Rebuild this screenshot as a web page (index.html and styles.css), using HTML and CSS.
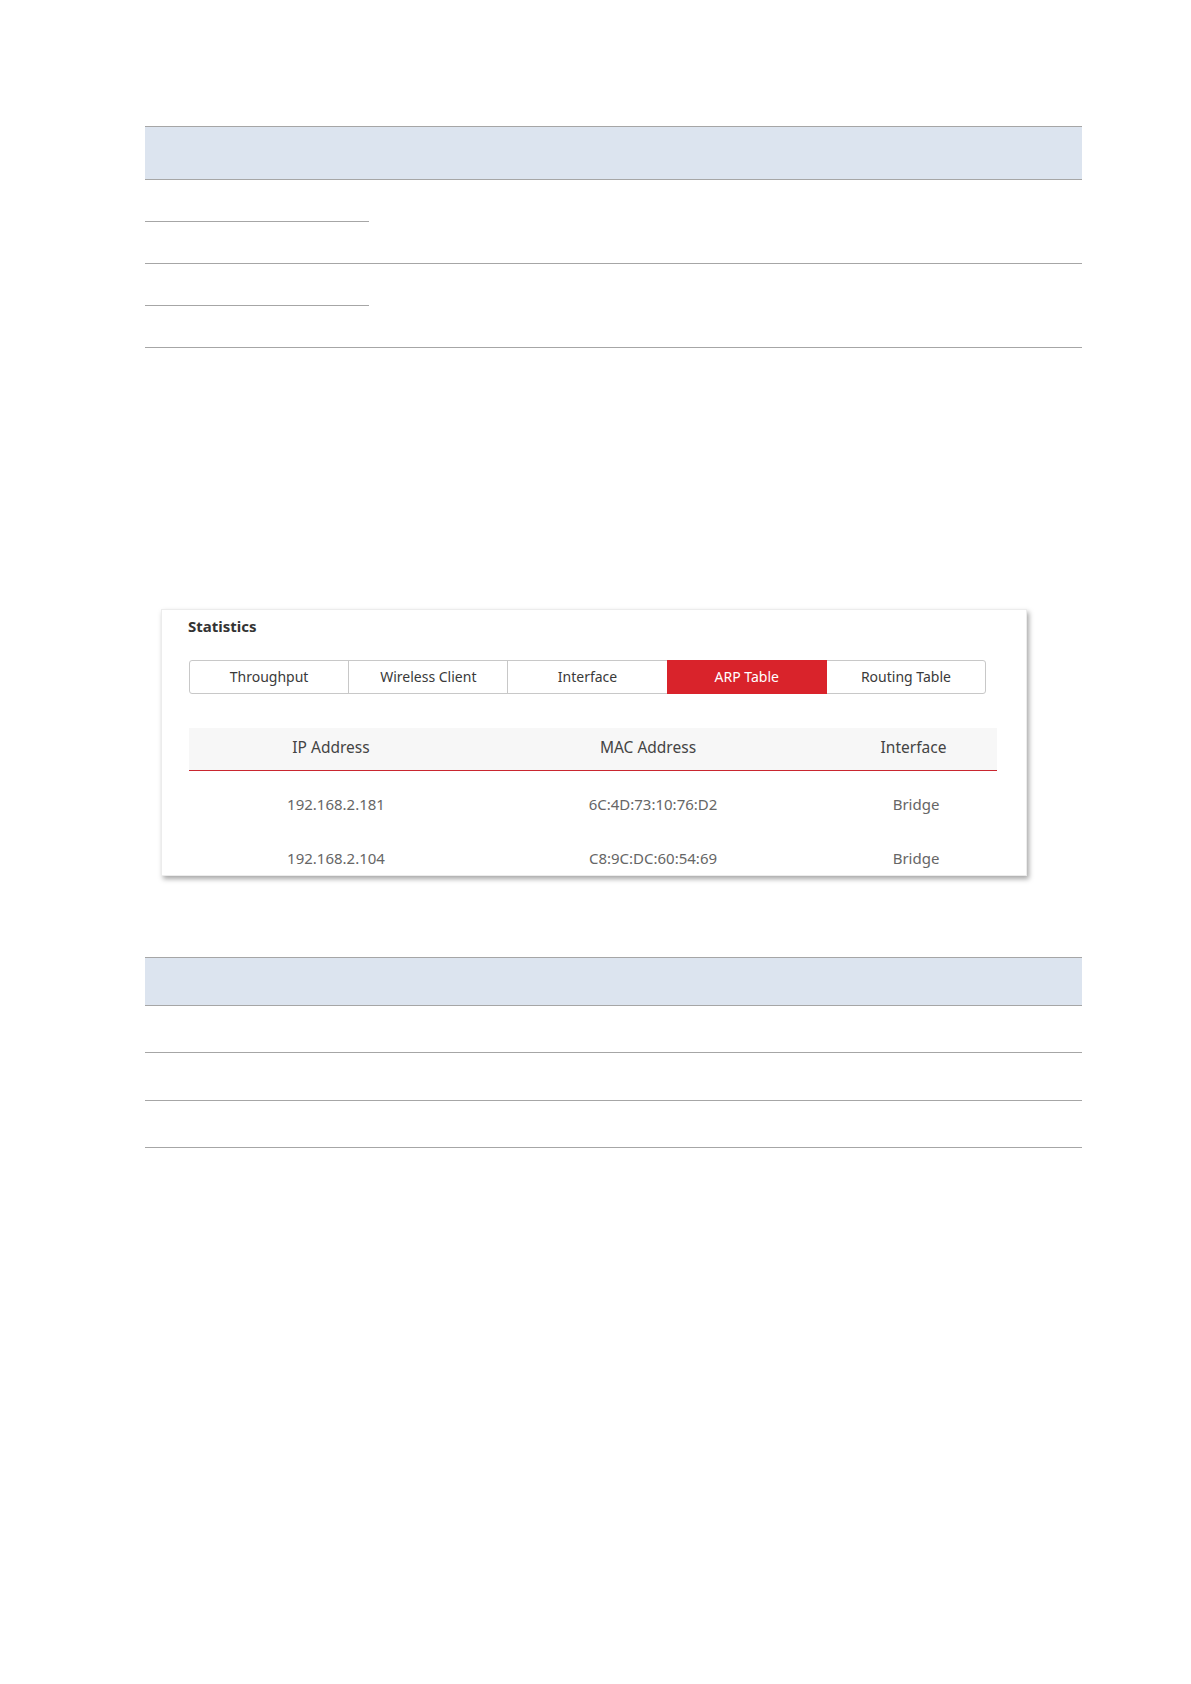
FILE: index.html
```html
<!DOCTYPE html>
<html lang="en">
<head>
  <meta charset="UTF-8">
  <title>Statistics - ARP Table</title>
  <link rel="stylesheet" href="styles.css">
</head>
<body>

  <div class="page">

    <div class="doc-table top-table">
      <div class="doc-head"></div>
      <div class="cell c1"></div>
      <div class="cell c2 span2"></div>
      <div class="cell c1"></div>
      <div class="cell c1"></div>
      <div class="cell c2 span2"></div>
      <div class="cell c1"></div>
    </div>

    <div class="card">
      <div class="card-title">Statistics</div>

      <div class="tabs">
        <div class="tab">Throughput</div>
        <div class="tab">Wireless Client</div>
        <div class="tab">Interface</div>
        <div class="tab active">ARP Table</div>
        <div class="tab">Routing Table</div>
      </div>

      <div class="arp">
        <div class="arp-head">
          <span>IP Address</span>
          <span>MAC Address</span>
          <span>Interface</span>
        </div>
        <div class="arp-body">
          <div class="arp-row">
            <span>192.168.2.181</span>
            <span>6C:4D:73:10:76:D2</span>
            <span>Bridge</span>
          </div>
          <div class="arp-row">
            <span>192.168.2.104</span>
            <span>C8:9C:DC:60:54:69</span>
            <span>Bridge</span>
          </div>
        </div>
      </div>
    </div>

    <div class="doc-table bottom-table">
      <div class="doc-head"></div>
      <div class="row"></div>
      <div class="row"></div>
      <div class="row"></div>
    </div>

  </div>

</body>
</html>
```

FILE: styles.css
```css
* { box-sizing: border-box; }
body { margin: 0; background: #fff; font-family: "Noto Sans", "Open Sans", Arial, sans-serif; }
.page { width: 937px; margin-left: 145px; padding-top: 126px; }

/* document tables (empty) */
.doc-table { border-top: 1px solid #a6a6a6; }
.doc-head { background: #dce4ef; border-bottom: 1px solid #a6a6a6; }

.top-table { display: grid; grid-template-columns: 224px 1fr; grid-template-rows: 53px repeat(4, 42px); }
.top-table .doc-head { grid-column: 1 / 3; }
.top-table .cell { border-bottom: 1px solid #a6a6a6; }
.top-table .c1 { grid-column: 1; }
.top-table .c2 { grid-column: 2; }
.top-table .span2 { grid-row: span 2; }

.bottom-table { margin-top: 81px; }
.bottom-table .doc-head { height: 48px; }
.bottom-table .row { height: 47px; border-bottom: 1px solid #a6a6a6; }
.bottom-table .row:nth-child(3) { height: 48px; }

/* statistics card */
.card { width: 866px; height: 267px; margin: 261px 0 0 16px; padding: 0 27px; background: #fff; border: 1px solid #ececec; box-shadow: 2px 3px 5px rgba(0,0,0,0.35); overflow: hidden; }
.card-title { font-size: 15px; font-weight: bold; color: #333; line-height: 20px; padding-top: 6px; margin-left: -1px; }

.tabs { display: flex; width: 797px; margin-top: 24px; }
.tab { flex: 1; height: 34px; line-height: 32px; text-align: center; font-size: 14px; color: #3a3a3a; border: 1px solid #c8c8c8; margin-left: -1px; }
.tab:first-child { margin-left: 0; border-radius: 3px 0 0 3px; }
.tab:last-child { border-radius: 0 3px 3px 0; }
.tab.active { background: #d9232b; border-color: #d9232b; color: #fff; position: relative; }

.arp { width: 808px; margin-top: 34px; }
.arp-head, .arp-row { display: grid; grid-template-columns: 284px 350px 1fr; text-align: center; }
.arp-head span:nth-child(3), .arp-row span:nth-child(3) { padding-left: 7px; }
.arp-head { height: 43px; line-height: 39px; background: #f7f7f7; border-bottom: 1px solid #c9262f; font-size: 15.5px; color: #444; }
.arp-body { padding-top: 6px; padding-left: 5px; }
.arp-row { height: 54px; line-height: 54px; font-size: 15px; color: #666; }
```
